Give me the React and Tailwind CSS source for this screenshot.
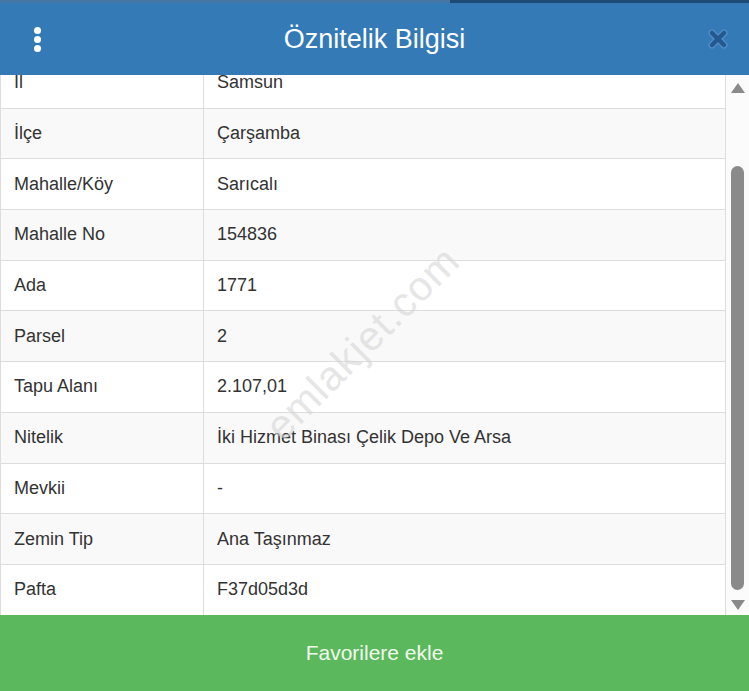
import React from "react";

const rows = [
  ["İl", "Samsun"],
  ["İlçe", "Çarşamba"],
  ["Mahalle/Köy", "Sarıcalı"],
  ["Mahalle No", "154836"],
  ["Ada", "1771"],
  ["Parsel", "2"],
  ["Tapu Alanı", "2.107,01"],
  ["Nitelik", "İki Hizmet Binası Çelik Depo Ve Arsa"],
  ["Mevkii", "-"],
  ["Zemin Tip", "Ana Taşınmaz"],
  ["Pafta", "F37d05d3d"],
];

export default function App() {
  return (
    <div
      className="w-[749px] h-[691px] flex flex-col overflow-hidden bg-white"
      style={{ fontFamily: '"Liberation Sans", Arial, sans-serif' }}
    >
      <div className="h-[3px] flex shrink-0">
        <div className="w-[450px] bg-[#4576a6]" />
        <div className="flex-1 bg-[#1f4a78]" />
      </div>
      <div className="h-[72px] shrink-0 bg-[#337ab7] grid grid-cols-[80px_1fr_80px] items-center">
        <div className="flex flex-col gap-[2px] items-center pl-[8px] w-[66px]">
          <span className="w-[7px] h-[7px] rounded-full bg-white" />
          <span className="w-[7px] h-[7px] rounded-full bg-white" />
          <span className="w-[7px] h-[7px] rounded-full bg-white" />
        </div>
        <div className="text-white text-[27px] leading-none text-center">Öznitelik Bilgisi</div>
        <div className="flex justify-end pr-[21px]">
          <svg width="20" height="20" viewBox="0 0 20 20">
            <path d="M4 4 L16 16 M16 4 L4 16" stroke="#4f8fc9" strokeWidth="7" strokeLinecap="round" />
            <path d="M4 4 L16 16 M16 4 L4 16" stroke="#23598c" strokeWidth="4.5" strokeLinecap="round" />
          </svg>
        </div>
      </div>
      <div className="relative flex h-[540px] shrink-0 overflow-hidden">
        <div className="flex-1 overflow-hidden border-l border-[#dddddd]">
          <div className="mt-[-17px]">
            {rows.map(([k, v], i) => (
              <div
                key={k}
                className={`flex h-[50.7px] border-b border-[#dddddd] text-[18px] text-[#333333] ${
                  i % 2 === 1 ? "bg-[#f9f9f9]" : "bg-white"
                }`}
              >
                <div className="w-[203px] shrink-0 border-r border-[#dddddd] flex items-center pl-[13px]">{k}</div>
                <div className="flex-1 flex items-center pl-[13px]">{v}</div>
              </div>
            ))}
          </div>
        </div>
        <div className="w-[24px] shrink-0 border-l border-[#dddddd] bg-[#fbfbfb] flex flex-col items-center pt-[8px] pb-[5px]">
          <svg width="14" height="10" viewBox="0 0 14 10">
            <path d="M7 0 L14 10 L0 10 Z" fill="#8a8a8a" />
          </svg>
          <div className="flex-1 w-full flex flex-col items-center pt-[73px] pb-[10px]">
            <div className="w-[13px] flex-1 rounded-full bg-[#8a8a8a]" />
          </div>
          <svg width="14" height="10" viewBox="0 0 14 10">
            <path d="M0 0 L14 0 L7 10 Z" fill="#8a8a8a" />
          </svg>
        </div>
        <div className="pointer-events-none absolute left-[236px] top-[238px] -rotate-45 text-[41px] text-[#d6d6d6] opacity-60 tracking-wide">
          emlakjet.com
        </div>
      </div>
      <div className="flex-1 bg-[#5cb85c] flex items-center justify-center text-[21px] text-[#f0fbec]">
        Favorilere ekle
      </div>
    </div>
  );
}
